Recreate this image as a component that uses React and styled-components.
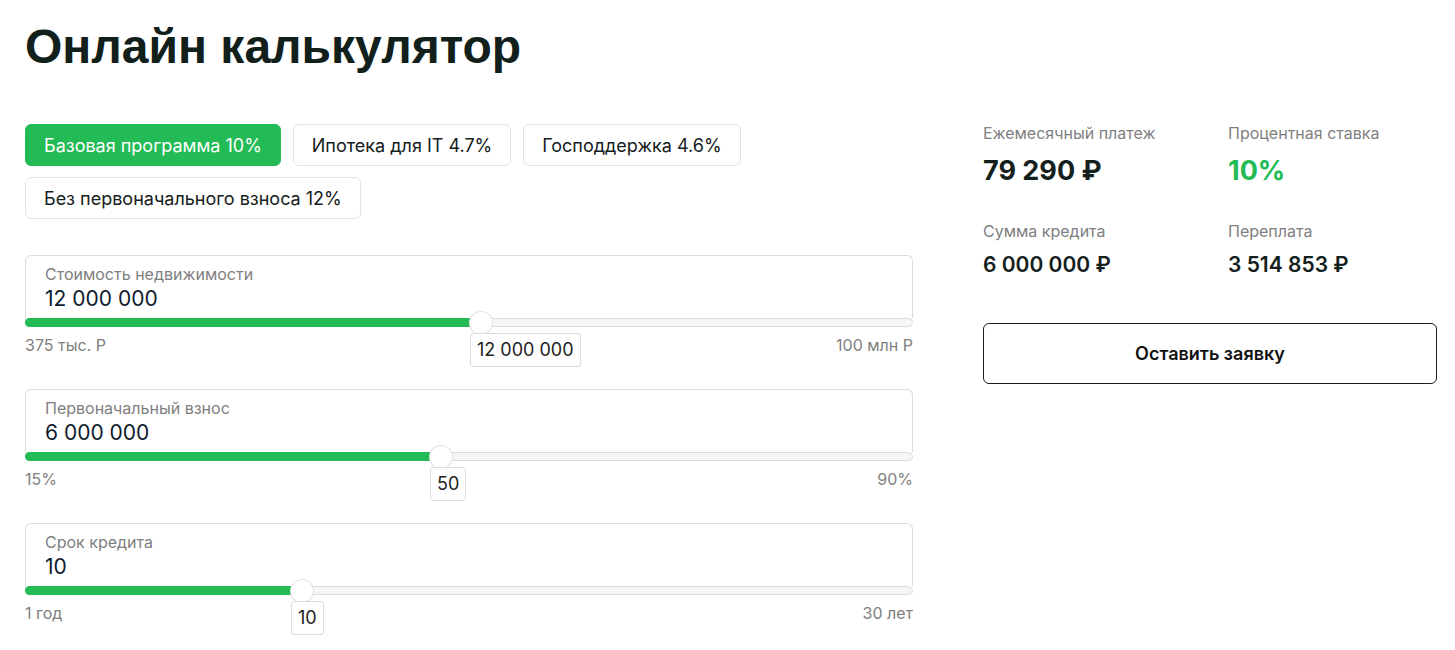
import React from 'react';
import styled, { createGlobalStyle } from 'styled-components';

const GlobalStyle = createGlobalStyle`
	body {
		margin: 0;
		background: #fff;
		font-family: Inter, 'Noto Sans', sans-serif;
		color: #14201c;
	}
`;

const Page = styled.div`
	box-sizing: border-box;
	min-height: 100vh;
	padding: 18px 25px 40px 25px;
`;

const Title = styled.h1`
	margin: 0 0 48px 0;
	font-family: 'Liberation Sans', Arial, sans-serif;
	font-size: 48px;
	line-height: 58px;
	font-weight: 700;
	color: #11201b;
`;

const Layout = styled.div`
	display: grid;
	grid-template-columns: 888px 454px;
	column-gap: 70px;
	align-items: start;
`;

const Programs = styled.div`
	display: flex;
	flex-wrap: wrap;
	gap: 11px 12px;
	width: 740px;
	margin-bottom: 36px;
`;

const Chip = styled.button`
	height: 42px;
	padding: 0 18px;
	border-radius: 6px;
	border: 1px solid ${(p) => (p.$active ? '#22bb55' : '#e3e3e3')};
	background: ${(p) => (p.$active ? '#22bb55' : '#fff')};
	color: ${(p) => (p.$active ? '#fff' : '#14201c')};
	font-family: Inter, sans-serif;
	font-size: 18px;
	cursor: pointer;
`;

const Fields = styled.div`
	display: flex;
	flex-direction: column;
	gap: 35px;
`;

const Field = styled.div`
	display: flex;
	flex-direction: column;
`;

const Box = styled.div`
	border: 1px solid #dcdcdc;
	border-bottom: none;
	border-radius: 6px 6px 0 0;
	padding: 9px 19px 6px 19px;
`;

const Label = styled.div`
	font-size: 16px;
	line-height: 18px;
	color: #808080;
`;

const Value = styled.div`
	font-size: 21px;
	line-height: 26px;
	margin-top: 3px;
	color: #0f1c2e;
`;

const Track = styled.div`
	position: relative;
	height: 7px;
	border: 1px solid #dcdcdc;
	border-radius: 5px;
	background: #f6f6f6;
`;

const Fill = styled.div`
	position: absolute;
	left: -1px;
	top: -1px;
	bottom: -1px;
	border-radius: 5px 0 0 5px;
	background: #22bb55;
`;

const Thumb = styled.div`
	position: absolute;
	top: 50%;
	width: 22px;
	height: 22px;
	margin-left: -11px;
	margin-top: -11px;
	border-radius: 50%;
	background: #fff;
	box-shadow: 0 0 0 1px #e2e2e2, 0 1px 2px rgba(0, 0, 0, 0.08);
`;

const Bubble = styled.div`
	position: absolute;
	top: 14px;
	margin-left: -11px;
	height: 32px;
	padding: 0 6px;
	border: 1px solid #dcdcdc;
	border-radius: 3px;
	background: #fff;
	font-size: 18px;
	line-height: 32px;
	color: #222;
	white-space: nowrap;
`;

const Limits = styled.div`
	display: flex;
	justify-content: space-between;
	margin-top: 9px;
	font-size: 16px;
	line-height: 18px;
	color: #808080;
`;

const Summary = styled.div`
	display: flex;
	flex-direction: column;
`;

const Stats = styled.div`
	display: grid;
	grid-template-columns: 245px 209px;
	row-gap: 36px;
`;

const Stat = styled.div`
	display: flex;
	flex-direction: column;
`;

const StatLabel = styled.div`
	font-size: 16px;
	line-height: 18px;
	color: #808080;
`;

const StatValue = styled.div`
	margin-top: ${(p) => (p.$big ? '14px' : '13px')};
	font-size: ${(p) => (p.$big ? '27px' : '21px')};
	line-height: ${(p) => (p.$big ? '30px' : '24px')};
	font-weight: ${(p) => (p.$big ? 700 : 600)};
	color: ${(p) => (p.$green ? '#22bb55' : '#14201c')};
`;

const Submit = styled.button`
	margin-top: 46px;
	height: 61px;
	border: 1px solid #14201c;
	border-radius: 6px;
	background: #fff;
	font-family: Inter, sans-serif;
	font-size: 18px;
	font-weight: 600;
	color: #111;
	cursor: pointer;
`;

const programs = [
	{ name: 'Базовая программа 10%', active: true },
	{ name: 'Ипотека для IT 4.7%' },
	{ name: 'Господдержка 4.6%' },
	{ name: 'Без первоначального взноса 12%' },
];

const fields = [
	{ label: 'Стоимость недвижимости', value: '12 000 000', pos: 455, bubble: '12 000 000', min: '375 тыс. Р', max: '100 млн Р' },
	{ label: 'Первоначальный взнос', value: '6 000 000', pos: 415, bubble: '50', min: '15%', max: '90%' },
	{ label: 'Срок кредита', value: '10', pos: 276, bubble: '10', min: '1 год', max: '30 лет' },
];

const Slider = ({ field }) => (
	<Field>
		<Box>
			<Label>{field.label}</Label>
			<Value>{field.value}</Value>
		</Box>
		<Track>
			<Fill style={{ width: field.pos + 1 }} />
			<Thumb style={{ left: field.pos }} />
			<Bubble style={{ left: field.pos }}>{field.bubble}</Bubble>
		</Track>
		<Limits>
			<span>{field.min}</span>
			<span>{field.max}</span>
		</Limits>
	</Field>
);

const App = () => {
	return (
		<Page>
			<GlobalStyle />
			<Title>Онлайн калькулятор</Title>
			<Layout>
				<div>
					<Programs>
						{programs.map((p) => (
							<Chip key={p.name} $active={p.active}>
								{p.name}
							</Chip>
						))}
					</Programs>
					<Fields>
						{fields.map((f) => (
							<Slider key={f.label} field={f} />
						))}
					</Fields>
				</div>
				<Summary>
					<Stats>
						<Stat>
							<StatLabel>Ежемесячный платеж</StatLabel>
							<StatValue $big>79 290 ₽</StatValue>
						</Stat>
						<Stat>
							<StatLabel>Процентная ставка</StatLabel>
							<StatValue $big $green>10%</StatValue>
						</Stat>
						<Stat>
							<StatLabel>Сумма кредита</StatLabel>
							<StatValue>6 000 000 ₽</StatValue>
						</Stat>
						<Stat>
							<StatLabel>Переплата</StatLabel>
							<StatValue>3 514 853 ₽</StatValue>
						</Stat>
					</Stats>
					<Submit>Оставить заявку</Submit>
				</Summary>
			</Layout>
		</Page>
	);
};

export default App;
